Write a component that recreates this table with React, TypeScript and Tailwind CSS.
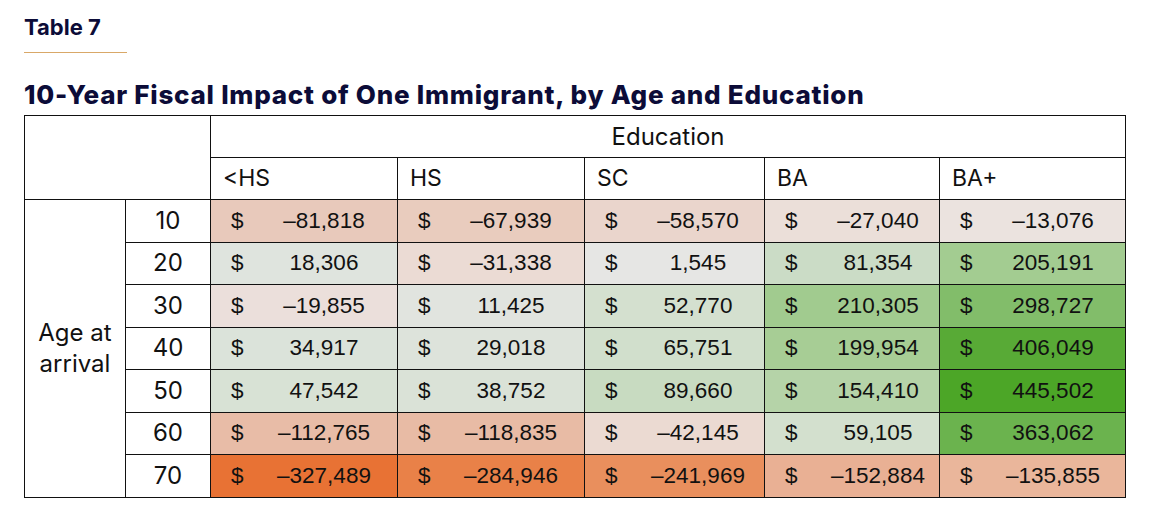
const cols = ["<HS", "HS", "SC", "BA", "BA+"];
const colWidths = ["w-[187px]", "w-[187px]", "w-[180px]", "w-[175px]", "w-[186px]"];

type Cell = { v: string; bg: string };

const rows: { age: number; cells: Cell[] }[] = [
  {
    age: 10,
    cells: [
      { v: "–81,818", bg: "bg-[#e8c9bb]" },
      { v: "–67,939", bg: "bg-[#e9ccbe]" },
      { v: "–58,570", bg: "bg-[#ead5cc]" },
      { v: "–27,040", bg: "bg-[#ebdfd9]" },
      { v: "–13,076", bg: "bg-[#ebe3df]" },
    ],
  },
  {
    age: 20,
    cells: [
      { v: "18,306", bg: "bg-[#dfe4de]" },
      { v: "–31,338", bg: "bg-[#ebdbd4]" },
      { v: "1,545", bg: "bg-[#e6e6e4]" },
      { v: "81,354", bg: "bg-[#cbdcc6]" },
      { v: "205,191", bg: "bg-[#a3cc91]" },
    ],
  },
  {
    age: 30,
    cells: [
      { v: "–19,855", bg: "bg-[#ebdfdb]" },
      { v: "11,425", bg: "bg-[#e1e4df]" },
      { v: "52,770", bg: "bg-[#d4e0cf]" },
      { v: "210,305", bg: "bg-[#a1cb8f]" },
      { v: "298,727", bg: "bg-[#82bd6a]" },
    ],
  },
  {
    age: 40,
    cells: [
      { v: "34,917", bg: "bg-[#dbe3da]" },
      { v: "29,018", bg: "bg-[#dde3db]" },
      { v: "65,751", bg: "bg-[#d1dfcc]" },
      { v: "199,954", bg: "bg-[#a7cd95]" },
      { v: "406,049", bg: "bg-[#58aa36]" },
    ],
  },
  {
    age: 50,
    cells: [
      { v: "47,542", bg: "bg-[#d8e2d5]" },
      { v: "38,752", bg: "bg-[#dae2d7]" },
      { v: "89,660", bg: "bg-[#c8dbc1]" },
      { v: "154,410", bg: "bg-[#b5d3a8]" },
      { v: "445,502", bg: "bg-[#4ca627]" },
    ],
  },
  {
    age: 60,
    cells: [
      { v: "–112,765", bg: "bg-[#e8bca7]" },
      { v: "–118,835", bg: "bg-[#e8bba5]" },
      { v: "–42,145", bg: "bg-[#ebdad2]" },
      { v: "59,105", bg: "bg-[#d3e0ce]" },
      { v: "363,062", bg: "bg-[#6bb34e]" },
    ],
  },
  {
    age: 70,
    cells: [
      { v: "–327,489", bg: "bg-[#e87234]" },
      { v: "–284,946", bg: "bg-[#e98148]" },
      { v: "–241,969", bg: "bg-[#e98f5d]" },
      { v: "–152,884", bg: "bg-[#e9b094]" },
      { v: "–135,855", bg: "bg-[#eab69b]" },
    ],
  },
];

const head = "font-['Inter',sans-serif]";
const num = "font-['Liberation_Sans',Arial,sans-serif]";

export default function App() {
  return (
    <div className="min-h-screen w-[1151px] h-[524px] bg-white pl-6 pt-[13px] text-[#111]">
      {/* Table label */}
      <div className={`${head} text-[22px] font-bold text-[#0c0c38] leading-[28px]`}>Table 7</div>
      <div className="mt-[11px] h-px w-[103px] bg-[#d9a868]" />

      {/* Title */}
      <h1 className={`${head} mt-[27px] text-[26px] font-extrabold text-[#0c0c38] leading-[30px] tracking-[0.75px]`}>
        10-Year Fiscal Impact of One Immigrant, by Age and Education
      </h1>

      <table className="mt-[5px] border-collapse table-fixed w-[1102px]">
        <colgroup>
          <col className="w-[101px]" />
          <col className="w-[85px]" />
          {colWidths.map((w, i) => (
            <col key={i} className={w} />
          ))}
        </colgroup>
        <thead>
          <tr className="h-[42px]">
            <th colSpan={2} rowSpan={2} className="border border-[#111]" />
            <th colSpan={5} className={`${head} border border-[#111] text-[24px] font-normal text-center`}>
              Education
            </th>
          </tr>
          <tr className="h-[42px]">
            {cols.map((c) => (
              <th key={c} className={`${head} border border-[#111] text-[23px] font-normal text-left pl-3`}>
                {c}
              </th>
            ))}
          </tr>
        </thead>
        <tbody>
          {rows.map((r, ri) => (
            <tr key={r.age} className="h-[42.5px]">
              {ri === 0 && (
                <td rowSpan={7} className={`${head} border border-[#111] text-[24px] text-center leading-[31px] align-middle`}>
                  Age at
                  <br />
                  arrival
                </td>
              )}
              <td className={`${head} border border-[#111] text-[24px] text-center`}>{r.age}</td>
              {r.cells.map((c, ci) => (
                <td key={ci} className={`${c.bg} border border-[#111] ${num} text-[22.5px] p-0`}>
                  <div className="flex items-center pl-5">
                    <span className="w-[12px]">$</span>
                    <span className="ml-[21px] w-[120px] text-center whitespace-nowrap">{c.v}</span>
                  </div>
                </td>
              ))}
            </tr>
          ))}
        </tbody>
      </table>
    </div>
  );
}
